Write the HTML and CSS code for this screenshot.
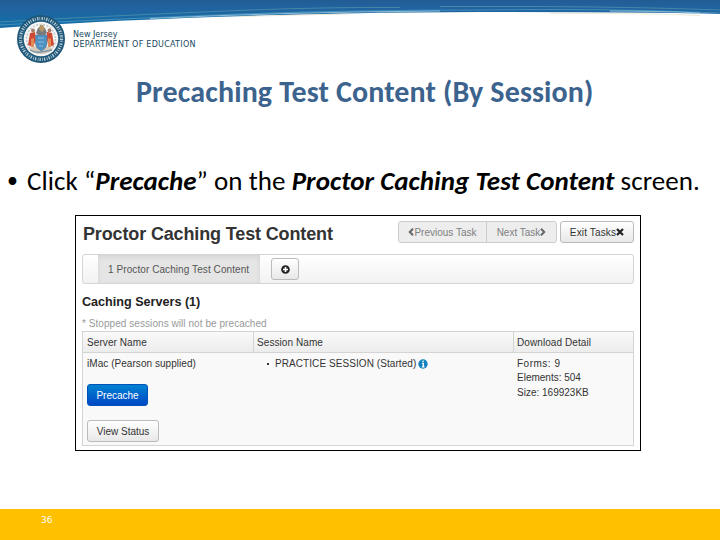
FILE: index.html
```
<!DOCTYPE html>
<html lang="en">
<head>
  <meta charset="UTF-8">
  <meta name="viewport" content="width=device-width, initial-scale=1.0">
  <title>Precaching Test Content (By Session)</title>
  <link rel="stylesheet" href="styles.css">
</head>
<body>

<div class="slide">
  <header class="banner">
    <svg class="wave" width="720" height="32" viewBox="0 0 720 32">
      <defs>
        <linearGradient id="sky" x1="0" y1="0" x2="0" y2="1">
          <stop offset="0" stop-color="#225c94"/>
          <stop offset="0.3" stop-color="#2163a0"/>
          <stop offset="0.8" stop-color="#146da6"/>
        </linearGradient>
      </defs>
      <path fill="url(#sky)" d="M0 0H720V14Q660 12 480 12Q380 12 280 15Q120 19 0 28Z"/>
      <g fill="none" stroke-width="0.8">
        <path stroke="#4f8fa8" d="M0 22Q80 17 250 10Q330 7 400 7.500M440 6.500H540Q640 7 720 10"/>
        <path stroke="#4f98bd" d="M0 25Q90 20 240 14Q350 10 480 10Q600 8 720 13"/>
        <path stroke="#a8d4e8" d="M150 18.500Q290 12 440 11M610 11Q660 11 700 13"/>
        <path stroke="#e9e5d2" d="M240 16.500Q300 15 350 14M550 13.500Q640 13 700 15.500"/>
      </g>
    </svg>
    <div class="brand">
      <svg class="seal" width="50" height="50" viewBox="0 0 50 50">
        <circle cx="25" cy="25" r="24" fill="#20587a"/>
        <circle cx="25" cy="25" r="20.500" fill="none" stroke="#b9cfd8" stroke-width="3.200" stroke-dasharray="1.300 1.100 .7 1.500"/>
        <circle cx="25" cy="25" r="17.300" fill="#f4f5f4"/>
        <circle cx="25" cy="25" r="14.500" fill="none" stroke="#c3c9cd" stroke-width="1.600" stroke-dasharray="2 1.500"/>
        <path fill="#d8cbb9" d="M13 34Q25 30 37 34L34 38Q25 42 16 38Z"/>
        <path fill="#cf4a35" d="M14 19l5-1 1 8-3 7-5-2zM31 18l5 1 2 12-5 2-2-7z"/>
        <path fill="#e28a55" d="M15 25l3-1v9h-3zM32 24l3 1v8h-3z"/>
        <circle cx="17" cy="16.500" r="1.900" fill="#a87963"/>
        <circle cx="33.500" cy="16.500" r="1.900" fill="#a87963"/>
        <path fill="#777b7d" d="M20 19l2-5 3-2 4 2 2 5-3 3h-5z"/>
        <path fill="#b79765" d="M24 11h3l2 4-3 3-3-3z"/>
        <path fill="#4c91c4" stroke="#6e7b87" stroke-width=".6" d="M19.500 21h11.500v9q0 4-5.700 7-5.800-3-5.800-7z"/>
        <path fill="none" stroke="#a6c7de" stroke-width=".8" d="M22 24h6M22 28h6M23 32h4"/>
        <path fill="none" stroke="#7895a9" stroke-width="1.400" d="M14 36q5 3 11 2t11-2"/>
      </svg>
      <div class="brand-name">
        <span class="state">New Jersey</span>
        <span class="dept">DEPARTMENT OF EDUCATION</span>
      </div>
    </div>
  </header>

  <main>
    <h1>Precaching Test Content (By Session)</h1>
    <p class="step"><span class="dot">•</span><span>Click “<b>Precache</b>” on the <b>Proctor Caching Test Content</b> screen.</span></p>

    <section class="app">
      <div class="app-head">
        <h2>Proctor Caching Test Content</h2>
        <div class="task-nav">
          <div class="btn-group">
            <button class="btn prev" disabled><svg width="6" height="8" viewBox="0 0 6 8"><path d="M5 .8L1.800 4 5 7.200" fill="none" stroke="#666" stroke-width="2"/></svg><span>Previous Task</span></button>
            <button class="btn next" disabled><span>Next Task</span><svg width="6" height="8" viewBox="0 0 6 8"><path d="M1 .8L4.200 4 1 7.200" fill="none" stroke="#666" stroke-width="2"/></svg></button>
          </div>
          <button class="btn exit"><span>Exit Tasks</span><svg width="8" height="8" viewBox="0 0 8 8"><path d="M1 1l6 6M7 1L1 7" stroke="#222" stroke-width="2.200"/></svg></button>
        </div>
      </div>

      <div class="tabs">
        <div class="tab">1 Proctor Caching Test Content</div>
        <button class="btn add"><svg width="9" height="9" viewBox="0 0 9 9"><circle cx="4.500" cy="4.500" r="4.300" fill="#222"/><path d="M4.500 2v5M2 4.500h5" stroke="#fff" stroke-width="1.700"/></svg></button>
      </div>

      <h3>Caching Servers (1)</h3>
      <p class="note">* Stopped sessions will not be precached</p>

      <div class="servers">
        <div class="row head">
          <div class="cell">Server Name</div>
          <div class="cell">Session Name</div>
          <div class="cell">Download Detail</div>
        </div>
        <div class="row">
          <div class="cell server">
            <span>iMac (Pearson supplied)</span>
            <button class="btn primary">Precache</button>
            <button class="btn status">View Status</button>
          </div>
          <div class="cell session">
            <i class="bullet"></i>
            <span>PRACTICE SESSION (Started)</span>
            <svg width="10" height="10" viewBox="0 0 10 10"><circle cx="5" cy="5" r="4.700" fill="#1682be"/><path d="M5 1.500v1.500M4 4.300h1.300v3.500M3.800 7.800h2.700" fill="none" stroke="#fff" stroke-width="1.300"/></svg>
          </div>
          <div class="cell detail">
            <span class="forms">Forms: 9</span>
            <span>Elements: 504</span>
            <span>Size: 169923KB</span>
          </div>
        </div>
      </div>
    </section>
  </main>

  <footer>36</footer>
</div>

</body>
</html>
```

FILE: styles.css
```
* {
    box-sizing: border-box;
}

body {
    margin: 0;
    background: #fff;
    font-family: "Liberation Sans", Arial, sans-serif;
    color: #333;
}

h1, h2, h3, p {
    margin: 0;
    white-space: nowrap;
}

svg {
    flex: none;
}

.slide {
    width: 720px;
    height: 540px;
    display: flex;
    flex-direction: column;
    overflow: hidden;
}

.banner {
    position: relative;
    height: 72px;
}

.wave {
    position: absolute;
    top: 0;
    left: 0;
}

.brand {
    position: relative;
    display: flex;
    padding: 14px 0 0 16px;
}

.brand-name {
    display: flex;
    flex-direction: column;
    padding: 16px 0 0 7px;
    font-family: "DejaVu Sans", sans-serif;
    font-size: 8px;
    line-height: 10px;
    color: #174a62;
    white-space: nowrap;
}

.dept {
    letter-spacing: 0.26px;
}

main {
    flex: 1;
}

h1 {
    height: 40px;
    padding-left: 136px;
    font-family: Carlito, Lato, sans-serif;
    font-size: 30px;
    line-height: 40px;
    letter-spacing: 0.13px;
    color: #3b638e;
}

.step {
    display: flex;
    height: 40px;
    margin: 49px 0 14px;
    padding-left: 7px;
    font-family: Carlito, Lato, sans-serif;
    font-size: 27px;
    line-height: 40px;
    letter-spacing: 0.05px;
    color: #000;
}

.dot {
    width: 20px;
    font-size: 22px;
}

.step b {
    font-style: italic;
}

.app {
    width: 566px;
    height: 236px;
    margin-left: 75px;
    padding: 5px 6px;
    border: 1px solid #000;
    font-size: 10px;
}

.app-head {
    display: flex;
    justify-content: space-between;
    height: 33px;
}

h2 {
    padding-left: 1px;
    font-size: 18px;
    line-height: 26px;
    letter-spacing: -0.14px;
}

.task-nav,
.btn-group {
    display: flex;
}

.task-nav {
    gap: 3px;
}

.btn {
    display: flex;
    align-items: center;
    justify-content: center;
    height: 22px;
    padding: 0;
    border: 1px solid #bbb;
    border-radius: 3px;
    background: linear-gradient(#fff, #e8e8e8);
    font-family: inherit;
    font-size: 10px;
    color: #333;
    white-space: nowrap;
}

.btn:disabled {
    background: #ededed;
    border-color: #ccc;
    color: #808080;
}

.prev {
    width: 89px;
    border-radius: 3px 0 0 3px;
}

.next {
    width: 71px;
    margin-left: -1px;
    border-radius: 0 3px 3px 0;
}

.exit {
    width: 74px;
    letter-spacing: 0.15px;
}

.tabs {
    display: flex;
    align-items: center;
    height: 30px;
    padding-left: 15px;
    border: 1px solid #d4d4d4;
    border-radius: 3px;
    background: linear-gradient(#fff, #f2f2f2);
}

.tab {
    width: 162px;
    height: 28px;
    padding-left: 10px;
    background: #e5e5e5;
    box-shadow: inset 0 2px 5px rgba(0, 0, 0, 0.08);
    line-height: 29px;
    letter-spacing: 0.08px;
    color: #555;
    white-space: nowrap;
}

.add {
    width: 28px;
    margin-left: 11px;
}

h3 {
    height: 20px;
    margin-top: 8px;
    font-size: 12.600px;
    line-height: 20px;
    color: #222;
}

.note {
    height: 19px;
    line-height: 24px;
    letter-spacing: 0.06px;
    color: #999;
}

.servers {
    height: 115px;
    border: 1px solid #d4d4d4;
    background: #f9f9f9;
    white-space: nowrap;
}

.row {
    display: grid;
    grid-template-columns: 170px 260px 1fr;
}

.head {
    height: 21px;
    border-bottom: 1px solid #d4d4d4;
    background: linear-gradient(#fafafa, #ececec);
    line-height: 21px;
    letter-spacing: 0.08px;
}

.cell {
    padding-left: 4px;
}

.head .cell + .cell {
    padding-left: 3px;
    border-left: 1px solid #d4d4d4;
}

.server {
    display: flex;
    flex-direction: column;
    align-items: flex-start;
    padding-top: 4px;
    line-height: 14px;
    letter-spacing: 0.05px;
}

.primary {
    width: 61px;
    margin-top: 13px;
    border-color: #0052b8;
    background: linear-gradient(#0082d0, #0047c6);
    color: #fff;
}

.status {
    width: 72px;
    margin-top: 14px;
}

.session {
    display: flex;
    align-items: center;
    height: 21px;
    padding-left: 14px;
    letter-spacing: 0.07px;
}

.bullet {
    width: 2px;
    height: 2px;
    margin-right: 6px;
    background: #333;
}

.session svg {
    margin-left: 2px;
}

.detail {
    display: flex;
    flex-direction: column;
    padding: 4px 0 0 4px;
    line-height: 14.300px;
}

.forms {
    letter-spacing: 0.5px;
}

footer {
    height: 31px;
    padding-left: 41px;
    background: #ffc000;
    font-family: "DejaVu Sans", sans-serif;
    font-size: 9px;
    line-height: 22px;
    color: #fff;
}
```
